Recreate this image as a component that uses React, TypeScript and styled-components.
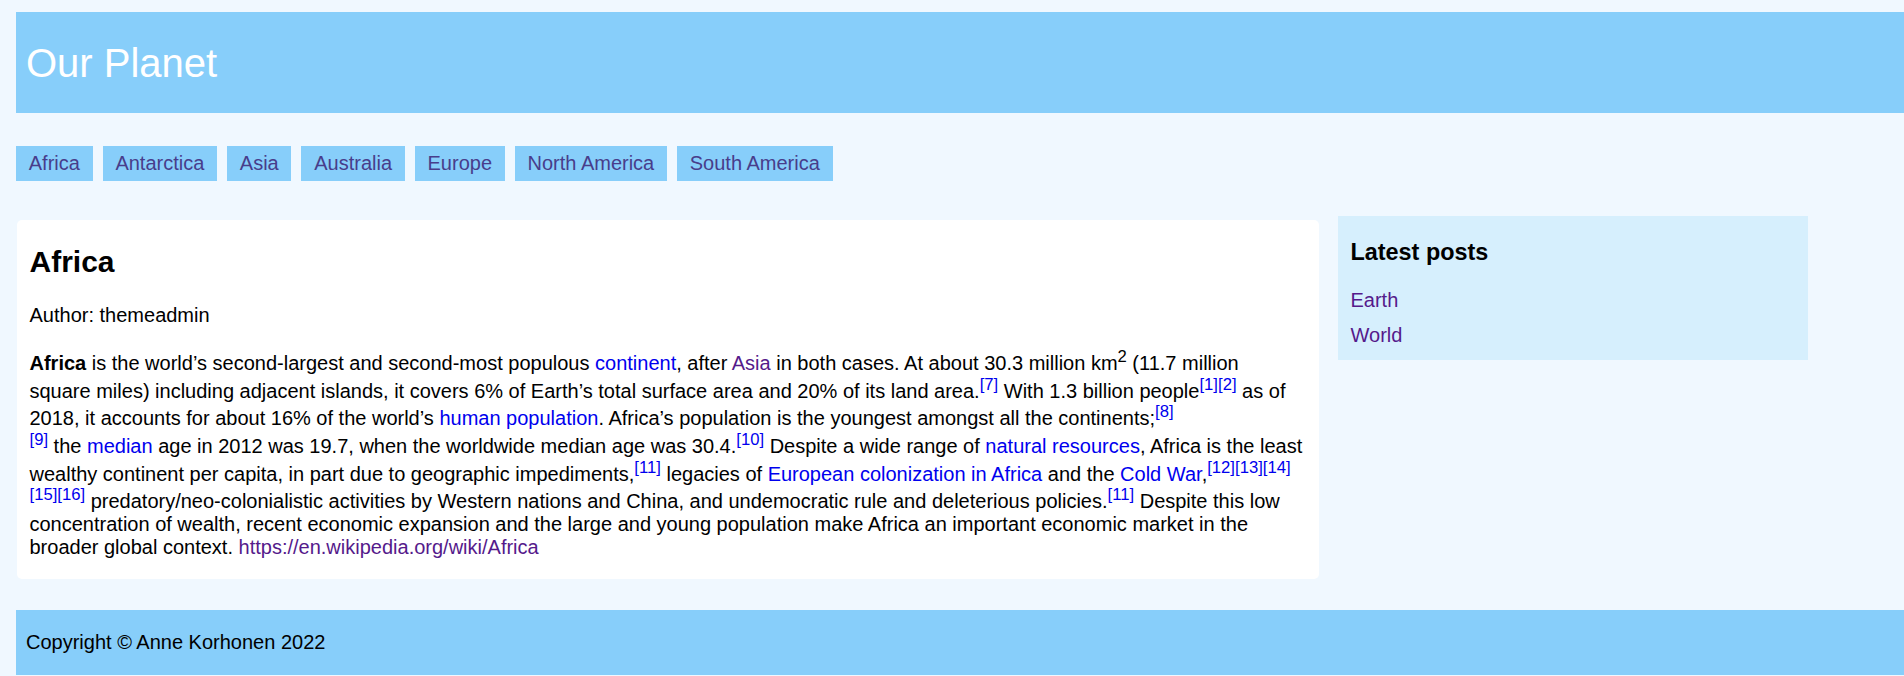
import React from "react";
import styled, { createGlobalStyle } from "styled-components";

const GlobalStyle = createGlobalStyle`
  html, body {
    margin: 0;
    padding: 0;
    background: #f0f8ff;
  }
  body {
    font-family: "Liberation Sans", Arial, sans-serif;
    font-size: 20px;
    color: #000;
  }
`;

const Page = styled.div`
  padding: 12px 0 0 16px;
  min-height: 676px;
  box-sizing: border-box;
  overflow: hidden;
`;

const Header = styled.header`
  background: #87cefa;
  padding: 0 10px;
  display: flow-root;
`;

const Title = styled.h1`
  margin: 27.5px 0;
  font-size: 40px;
  line-height: 46px;
  font-weight: normal;
  color: #fff;
`;

const Nav = styled.nav`
  display: flex;
  gap: 10px;
  margin-top: 33px;
`;

const NavLink = styled.a`
  display: block;
  background: #87cefa;
  color: #483d8b;
  padding: 6px 12.75px;
  line-height: 23px;
  text-decoration: none;
`;

const Layout = styled.div`
  display: grid;
  grid-template-columns: 1303px 470px;
  column-gap: 19px;
  align-items: start;
  margin-top: 35px;
`;

const Card = styled.article`
  background: #fff;
  border-radius: 5px;
  padding: 0 16px 0 12.5px;
  margin: 4px 0 0 1px;
`;

const PostTitle = styled.h2`
  font-size: 30px;
  margin: 25px 0;
`;

const Text = styled.p`
  margin: 20px 0;
`;

const Link = styled.a<{ $visited?: boolean }>`
  color: ${(p) => (p.$visited ? "#551a8b" : "#0000ee")};
  text-decoration: none;
`;

const Ref = styled.a`
  color: #0000ee;
  text-decoration: none;
`;

const Sidebar = styled.aside`
  background: #d6effd;
  padding: 0 12.5px 1px;
`;

const SideTitle = styled.h3`
  font-size: 23.4px;
  margin: 22.5px 0 23.4px;
`;

const PostList = styled.ul`
  list-style: none;
  margin: 0;
  padding: 0;
`;

const PostItem = styled.li`
  line-height: 23px;
  margin-bottom: 12px;
`;

const Footer = styled.footer`
  background: #87cefa;
  padding: 1px 10px;
  margin-top: 31px;
`;

const continents = [
  "Africa",
  "Antarctica",
  "Asia",
  "Australia",
  "Europe",
  "North America",
  "South America",
];

const Cite = ({ n }: { n: number[] }) => (
  <sup>
    {n.map((x) => (
      <Ref key={x} href="#">
        [{x}]
      </Ref>
    ))}
  </sup>
);

export default function App() {
  return (
    <>
      <GlobalStyle />
      <Page>
        <Header>
          <Title>Our Planet</Title>
        </Header>
        <Nav>
          {continents.map((c) => (
            <NavLink key={c} href="#">
              {c}
            </NavLink>
          ))}
        </Nav>
        <Layout>
          <Card>
            <PostTitle>Africa</PostTitle>
            <Text>Author: themeadmin</Text>
            <Text>
              <b>Africa</b> is the world’s second-largest and second-most populous{" "}
              <Link href="#">continent</Link>, after <Link $visited href="#">Asia</Link> in
              both cases. At about 30.3 million km<sup>2</sup> (11.7 million square miles)
              including adjacent islands, it covers 6% of Earth’s total surface area and 20%
              of its land area.<Cite n={[7]} /> With 1.3 billion people<Cite n={[1, 2]} /> as
              of 2018, it accounts for about 16% of the world’s{" "}
              <Link href="#">human population</Link>. Africa’s population is the youngest
              amongst all the continents;<Cite n={[8]} />
              <br />
              <Cite n={[9]} /> the <Link href="#">median</Link> age in 2012 was 19.7, when
              the worldwide median age was 30.4.<Cite n={[10]} /> Despite a wide range of{" "}
              <Link href="#">natural resources</Link>, Africa is the least wealthy continent
              per capita, in part due to geographic impediments,<Cite n={[11]} /> legacies of{" "}
              <Link href="#">European colonization in Africa</Link> and the{" "}
              <Link href="#">Cold War</Link>,<Cite n={[12, 13, 14, 15, 16]} />{" "}
              predatory/neo-colonialistic activities by Western nations and China, and
              undemocratic rule and deleterious policies.<Cite n={[11]} /> Despite this low
              concentration of wealth, recent economic expansion and the large and young
              population make Africa an important economic market in the broader global
              context.{" "}
              <Link $visited href="#">
                https://en.wikipedia.org/wiki/Africa
              </Link>
            </Text>
          </Card>
          <Sidebar>
            <SideTitle>Latest posts</SideTitle>
            <PostList>
              <PostItem>
                <Link $visited href="#">Earth</Link>
              </PostItem>
              <PostItem>
                <Link $visited href="#">World</Link>
              </PostItem>
            </PostList>
          </Sidebar>
        </Layout>
        <Footer>
          <Text>Copyright © Anne Korhonen 2022</Text>
        </Footer>
      </Page>
    </>
  );
}
